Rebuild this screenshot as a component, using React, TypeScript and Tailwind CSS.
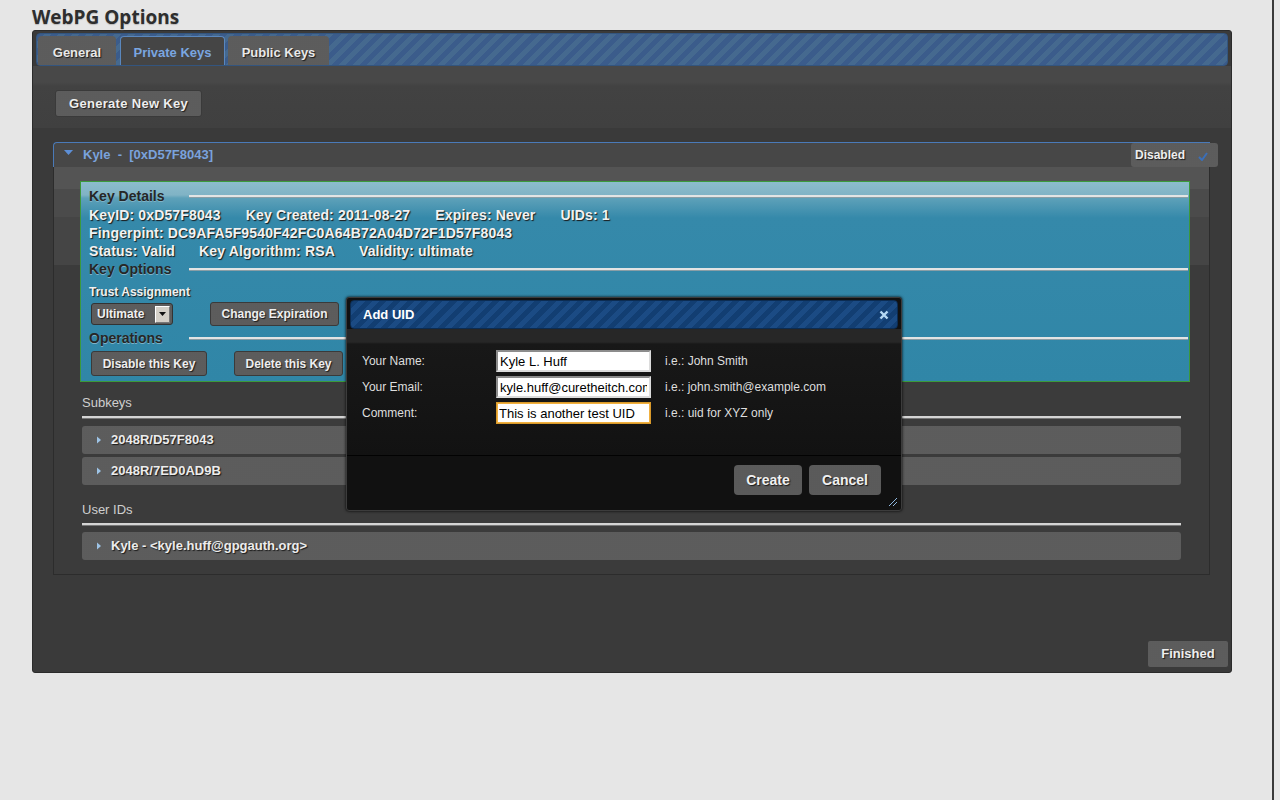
import { FC, ReactNode } from "react";

const dotted =
  "bg-[radial-gradient(circle,#5e5e5e_0.7px,transparent_0.8px)] bg-[length:2px_2px]";
const shadow = "[text-shadow:1px_1px_1px_#1a1a1a]";

const DarkButton: FC<{ children: ReactNode; className?: string }> = ({
  children,
  className = "",
}) => (
  <button
    className={`flex items-center justify-center rounded-[3px] border border-[#3a3a3a] bg-[#4d4d4d] ${dotted} text-[12px] font-bold text-[#eeeeee] ${shadow} ${className}`}
  >
    {children}
  </button>
);

const Heading: FC<{ title: string }> = ({ title }) => (
  <div className="flex items-center pr-[1px]">
    <span className="w-[100px] text-[14px] font-bold leading-[18px] text-[#262626] [text-shadow:0_1px_0_#7fb3c7]">
      {title}
    </span>
    <div className="h-[2px] flex-1 bg-[#e2e4e4] shadow-[0_1px_0_#8a9ea6]" />
  </div>
);

const Row: FC<{ label: string }> = ({ label }) => (
  <div
    className={`flex h-[28px] items-center rounded-[3px] bg-[#4b4b4b] ${dotted} pl-[14px]`}
  >
    <svg width="6" height="8" viewBox="0 0 6 8" className="mr-[9px]">
      <path d="M1 0.5 L5 4 L1 7.5 Z" fill="#9ec4e6" />
    </svg>
    <span className={`text-[13px] font-bold text-[#ececec] ${shadow}`}>{label}</span>
  </div>
);

const SectionLabel: FC<{ text: string; className?: string }> = ({ text, className = "" }) => (
  <>
    <div className={`text-[13px] leading-[16px] text-[#cfcfcf] ${className}`}>{text}</div>
    <div className="mt-[5px] h-[2px] bg-[#d4d4d4] shadow-[0_1px_0_#777]" />
  </>
);

const Field: FC<{ label: string; value: string; hint: string; focus?: boolean }> = ({
  label,
  value,
  hint,
  focus,
}) => (
  <div className="flex h-[22px] items-center">
    <span className="w-[134px] text-[12px] text-[#dedede]">{label}</span>
    <input
      readOnly
      value={value}
      className={`h-[22px] w-[155px] bg-white px-[2px] text-[13px] text-black outline-none ${
        focus
          ? "border border-[#d99a2b] shadow-[inset_0_0_0_1px_#f0b040]"
          : "border-2 border-[#8c8c8c] border-r-[#dcdcdc] border-b-[#dcdcdc]"
      }`}
    />
    <span className="ml-[14px] text-[12px] text-[#dedede]">{hint}</span>
  </div>
);

const App: FC = () => {
  return (
    <div className="relative min-h-[800px] bg-[#e6e6e6] font-['Liberation_Sans',Arial,sans-serif]">
      <div className="absolute left-[1272px] top-0 h-[800px] w-[2px] bg-[#3a3a3a]" />

      <div className="pl-[32px]">
        <h1 className="h-[30px] pt-[4px] font-['Open_Sans',sans-serif] text-[19px] font-bold leading-[26px] text-[#2e2e2e] [text-shadow:0_1px_1px_#bbb]">
          WebPG Options
        </h1>

        <div className="flex h-[643px] w-[1200px] flex-col rounded-[3px] border border-[#2b2b2b] bg-[#3a3a3a]">
          {/* tab bar */}
          <div className="mx-[3px] mt-[2px] flex h-[33px] items-end rounded-[4px] border border-[#33557f] bg-[repeating-linear-gradient(135deg,#3b5c8b_0px,#3b5c8b_5px,#45698f_5px,#45698f_10px)] pl-[1px]">
            <div
              className={`flex h-[29px] w-[78px] items-center justify-center rounded-t-[4px] bg-[#474747] ${dotted} pt-[5px] text-[13px] font-bold text-[#e8e8e8] ${shadow}`}
            >
              General
            </div>
            <div className="ml-[4px] flex h-[29px] w-[105px] items-center justify-center rounded-t-[4px] border border-b-0 border-[#5a87bd] bg-[#454545] pt-[3px] text-[13px] font-bold text-[#7aa6e0]">
              Private Keys
            </div>
            <div
              className={`ml-[3px] flex h-[29px] w-[101px] items-center justify-center rounded-t-[4px] bg-[#474747] ${dotted} pt-[5px] text-[13px] font-bold text-[#e8e8e8] ${shadow}`}
            >
              Public Keys
            </div>
          </div>

          {/* toolbar */}
          <div className="h-[62px] bg-[linear-gradient(to_bottom,#484848_0px,#484848_16px,#424242_20px,#404040_100%)] pl-[22px] pt-[24px]">
            <DarkButton className="h-[27px] w-[147px] text-[13px] tracking-[0.3px]">Generate New Key</DarkButton>
          </div>

          {/* content */}
          <div className="flex-1 pl-[20px] pt-[14px]">
            <div className="w-[1157px]">
              <div className="flex h-[25px] items-center rounded-tl-[4px] border-l border-t border-[#4a7ab8] bg-[#474747] pl-[10px]">
                <svg width="9" height="6" viewBox="0 0 9 6" className="mr-[10px] -mt-[4px]">
                  <path d="M0 0 L9 0 L4.5 5 Z" fill="#5d8fd6" />
                </svg>
                <span className="text-[13px] font-bold text-[#7aa2dc] whitespace-pre">
                  {"Kyle  -  [0xD57F8043]"}
                </span>
                <div
                  className={`ml-auto -mr-[8px] flex h-[24px] w-[87px] items-center rounded-[3px] bg-[#444] ${dotted} pl-[4px]`}
                >
                  <span className={`text-[12px] font-bold text-[#eeeeee] ${shadow}`}>Disabled</span>
                  <svg width="10" height="9" viewBox="0 0 10 9" className="ml-auto mr-[10px] mt-[2px]">
                    <path d="M1 5 L4 8 L9 1" stroke="#3b6fb8" strokeWidth="2" fill="none" />
                  </svg>
                </div>
              </div>

              <div className="border-x border-b border-[#2c2c2c] bg-[linear-gradient(to_bottom,#545454_0px,#545454_22px,#4b4b4b_22px,#4b4b4b_50px,#454545_50px,#454545_98px,#3b3b3b_98px)] pb-[14px] pt-[14px]">
                {/* key details panel */}
                <div className="ml-[26px] mr-[19px] h-[201px] border border-[#3b9a3b] bg-[linear-gradient(to_bottom,#8cbccc_0px,#80b3c5_13px,#5ea1b9_16px,#3589aa_36px,#3086a7_100%)] pl-[8px] pt-[5px]">
                  <Heading title="Key Details" />
                  <div className={`mt-[1px] text-[14px] font-bold leading-[18px] tracking-[0.15px] text-[#f2f2f2] ${shadow}`}>
                    <div className="flex gap-[25px]">
                      <span>KeyID: 0xD57F8043</span>
                      <span>Key Created: 2011-08-27</span>
                      <span>Expires: Never</span>
                      <span>UIDs: 1</span>
                    </div>
                    <div>Fingerpint: DC9AFA5F9540F42FC0A64B72A04D72F1D57F8043</div>
                    <div className="flex gap-[24px]">
                      <span>Status: Valid</span>
                      <span>Key Algorithm: RSA</span>
                      <span>Validity: ultimate</span>
                    </div>
                  </div>
                  <Heading title="Key Options" />
                  <div className={`mt-[7px] text-[12px] font-bold leading-[14px] text-[#f0f0f0] ${shadow}`}>
                    Trust Assignment
                  </div>
                  <div className="mt-[3px] flex items-center">
                    <div
                      className={`ml-[2px] flex h-[22px] w-[82px] items-center rounded-[3px] border border-[#333] bg-[#4a4a4a] ${dotted} pl-[5px]`}
                    >
                      <span className={`text-[12px] font-bold text-[#f0f0f0] ${shadow}`}>Ultimate</span>
                      <div className="ml-auto mr-[2px] flex h-[17px] w-[15px] items-center justify-center border border-[#fff] border-b-[#777] border-r-[#777] bg-[#d4d0c8]">
                        <svg width="7" height="4" viewBox="0 0 7 4">
                          <path d="M0 0 L7 0 L3.5 4 Z" fill="#111" />
                        </svg>
                      </div>
                    </div>
                    <DarkButton className="ml-[37px] h-[24px] w-[129px]">Change Expiration</DarkButton>
                  </div>
                  <div className="mt-[3px]">
                    <Heading title="Operations" />
                  </div>
                  <div className="mt-[4px] flex items-center">
                    <DarkButton className="ml-[2px] h-[25px] w-[116px]">Disable this Key</DarkButton>
                    <DarkButton className="ml-[27px] h-[25px] w-[109px]">Delete this Key</DarkButton>
                  </div>
                </div>

                {/* subkeys and uids */}
                <div className="mx-[28px] mt-[13px]">
                  <SectionLabel text="Subkeys" />
                  <div className="mt-[8px] flex flex-col gap-[3px]">
                    <Row label="2048R/D57F8043" />
                    <Row label="2048R/7ED0AD9B" />
                  </div>
                  <SectionLabel text="User IDs" className="mt-[17px]" />
                  <div className="mt-[7px]">
                    <Row label="Kyle - <kyle.huff@gpgauth.org>" />
                  </div>
                </div>
              </div>
            </div>
          </div>

          <div className="flex justify-end pb-[4px] pr-[2px]">
            <DarkButton className="h-[28px] w-[82px] text-[13px]">Finished</DarkButton>
          </div>
        </div>
      </div>

      {/* Add UID dialog */}
      <div className="absolute left-[346px] top-[297px] flex h-[214px] w-[556px] flex-col rounded-[3px] border border-[#3c3c3c] bg-[#111111] shadow-[0_0_3px_#000]">
        <div className="mx-[3px] mt-[2px] flex h-[29px] items-center rounded-[4px] border border-[#0c2c52] bg-[repeating-linear-gradient(135deg,#123e72_0px,#123e72_5px,#1b4b84_5px,#1b4b84_10px)] px-[12px]">
          <span className="text-[13px] font-bold text-white">Add UID</span>
          <svg width="10" height="10" viewBox="0 0 10 10" className="ml-auto mr-[-4px]">
            <path d="M1.5 1.5 L8.5 8.5 M8.5 1.5 L1.5 8.5" stroke="#b4d8f4" strokeWidth="2.4" />
          </svg>
        </div>
        <div className="flex-1 bg-[linear-gradient(to_bottom,#272727_0px,#272727_13px,#181818_15px,#121212_100%)] pl-[15px] pt-[21px]">
          <div className="flex flex-col gap-[4px]">
            <Field label="Your Name:" value="Kyle L. Huff" hint="i.e.: John Smith" />
            <Field label="Your Email:" value="kyle.huff@curetheitch.com" hint="i.e.: john.smith@example.com" />
            <Field label="Comment:" value="This is another test UID" hint="i.e.: uid for XYZ only" focus />
          </div>
        </div>
        <div className="relative flex h-[55px] justify-end gap-[7px] border-t border-[#020202] pr-[20px] pt-[9px]">
          <button
            className={`h-[30px] w-[68px] rounded-[4px] bg-[#2a2a2a] ${dotted} text-[14px] font-bold text-[#f0f0f0] ${shadow}`}
          >
            Create
          </button>
          <button
            className={`h-[30px] w-[72px] rounded-[4px] bg-[#2a2a2a] ${dotted} text-[14px] font-bold text-[#f0f0f0] ${shadow}`}
          >
            Cancel
          </button>
          <svg width="11" height="11" viewBox="0 0 11 11" className="absolute bottom-[3px] right-[3px]">
            <path d="M10 2 L2 10 M10 6 L6 10" stroke="#8fb8e0" strokeWidth="1" />
          </svg>
        </div>
      </div>
    </div>
  );
};

export default App;
